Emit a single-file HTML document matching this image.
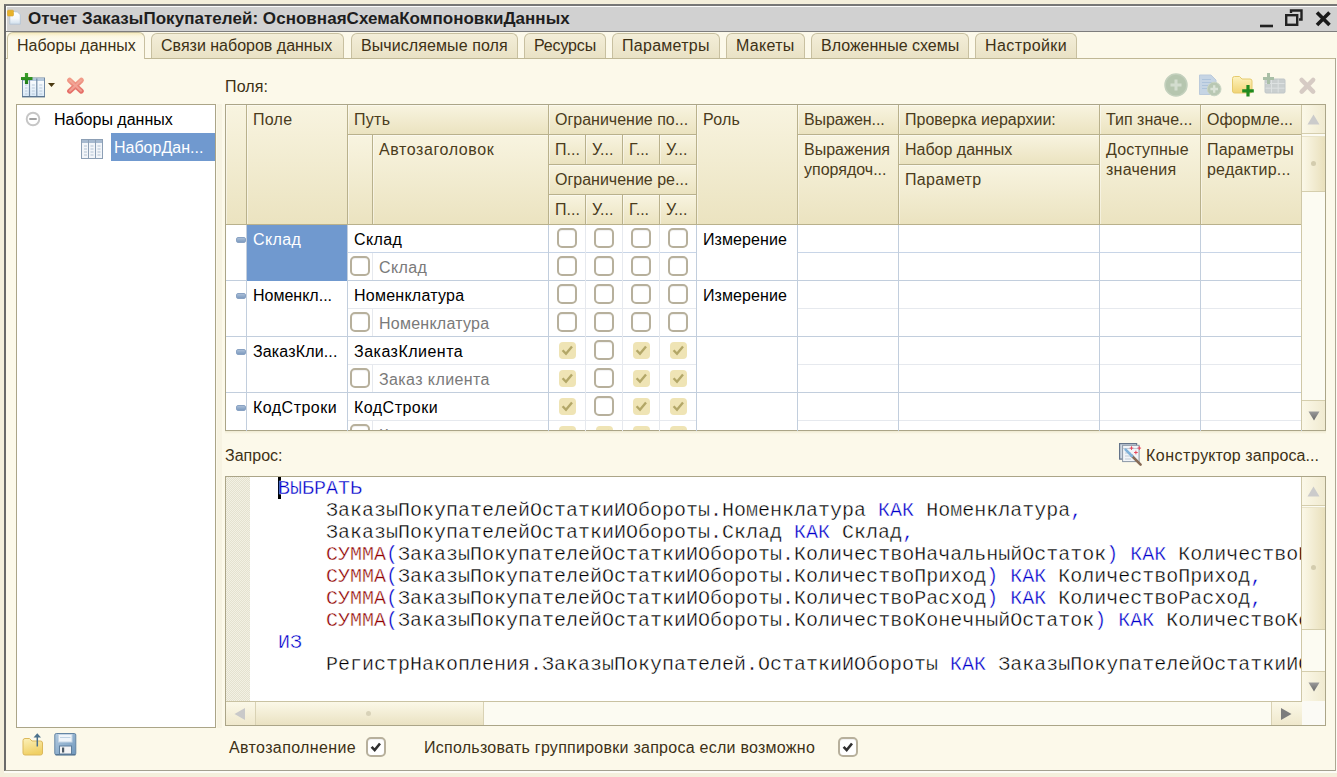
<!DOCTYPE html><html lang="ru"><head><meta charset="utf-8"><title>Отчет ЗаказыПокупателей</title><style>
*{box-sizing:border-box;margin:0;padding:0}
html,body{width:1337px;height:777px;overflow:hidden}
body{background:#f4efdc;font-family:"Liberation Sans",sans-serif;font-size:16px;color:#000;position:relative}
.a{position:absolute}
.t{position:absolute;white-space:nowrap;line-height:20px;height:20px}
#frame{left:4px;top:4px;width:1340px;height:767px;border:2px solid #6a6a6a;border-top-color:#777;border-bottom:1px solid #a3a090;background:#fcf9ea;box-shadow:0 2px 0 #fdfcf6}
#title{left:6px;top:6px;width:1331px;height:25px;background:#d1d1d1;border-top:1px solid #fcfcfc;border-left:1px solid #fcfcfc}
#titleline{left:6px;top:31px;width:1331px;height:1px;background:#7d7d7d}
#ttext{left:28px;top:9px;letter-spacing:.04px;font-weight:bold;font-size:17px;color:#1e1e1e;line-height:20px}
.tab{position:absolute;top:33px;height:25px;border:1px solid #c8c0a0;border-bottom:none;border-radius:6px 6px 0 0;background:linear-gradient(#f3eed8,#e9e2c5);color:#3d3116;line-height:24px;padding-left:9px;white-space:nowrap;overflow:hidden}
.tab.act{top:32px;height:27px;background:linear-gradient(#f6ebbd 0,#fbf6e0 3px,#fcf9ea 6px);line-height:26px;z-index:3}
#tabline{left:6px;top:58px;width:1330px;height:1px;background:#c0b896}
.hc{position:absolute;background:linear-gradient(#f8f4e0,#ebe3c0);border-right:1px solid #b9b18c;border-bottom:1px solid #b9b18c;box-shadow:inset 1px 1px 0 rgba(255,255,255,.45);color:#4a3c1c;padding:5px 0 0 6px;line-height:20px;overflow:hidden;white-space:nowrap}
.hc.w{white-space:normal}
.cb{position:absolute;width:20px;height:20px;border:2px solid #b7b09c;border-radius:5px;background:#fff;box-shadow:inset 0 1px 1px rgba(0,0,0,.06)}
.cd{position:absolute;width:17px;height:17px;border-radius:4px;background:#efe4b5}
.hl{position:absolute;height:1px;left:226px;width:1074px}
.vl{position:absolute;width:1px;top:225px;height:206px}
.sql{position:absolute;left:278px;font-family:"Liberation Mono",monospace;font-size:20px;line-height:22px;height:22px;white-space:pre;color:#000;-webkit-text-stroke:0.38px #fff}
.k{color:#0000cc}.f{color:#900000}
</style></head><body>
<div class="a" id="frame"></div>
<div class="a" id="title"></div><div class="a" id="titleline"></div>
<div class="t" id="ttext">Отчет ЗаказыПокупателей: ОсновнаяСхемаКомпоновкиДанных</div>
<div class="a" id="tabline"></div>
<div class="a" style="left:1335px;top:58px;width:1px;height:713px;background:#aca892"></div><div class="a" style="left:1336px;top:59px;width:1px;height:714px;background:#fdfcf5"></div>
<div class="tab act" style="left:7px;width:138px;">Наборы данных</div>
<div class="tab" style="left:151px;width:193px;">Связи наборов данных</div>
<div class="tab" style="left:351px;width:167px;letter-spacing:0.08px;">Вычисляемые поля</div>
<div class="tab" style="left:524px;width:82px;letter-spacing:-0.15px;">Ресурсы</div>
<div class="tab" style="left:612px;width:108px;letter-spacing:0.28px;">Параметры</div>
<div class="tab" style="left:726px;width:79px;letter-spacing:0.3px;">Макеты</div>
<div class="tab" style="left:811px;width:158px;">Вложенные схемы</div>
<div class="tab" style="left:975px;width:102px;letter-spacing:0.4px;">Настройки</div>
<svg class="a" style="left:20px;top:72px" width="38" height="26" viewBox="0 0 38 26">
<defs><linearGradient id="tc" x1="0" y1="0" x2="0" y2="1"><stop offset="0" stop-color="#ffffff"/><stop offset="1" stop-color="#d9e9f7"/></linearGradient>
<linearGradient id="pl" x1="0" y1="0" x2="0" y2="1"><stop offset="0" stop-color="#3da32b"/><stop offset="1" stop-color="#1f7d17"/></linearGradient></defs>
<rect x="2.500" y="6" width="22" height="18.500" fill="url(#tc)" stroke="#7089a5"/>
<rect x="3" y="6.500" width="21" height="2.500" fill="#b4c8dc"/>
<path d="M9.500 6.500v18M16.800 6.500v18" stroke="#7089a5" stroke-width="1.200"/>
<path d="M2 24.700h23" stroke="#5b7590" stroke-width="1.400"/>
<path d="M5 13h2.500M5 16h2.500M5 19h2.500M5 22h2.500M11.800 13h3M11.800 16h3M11.800 19h3M11.800 22h3M19.300 13h3M19.300 16h3M19.300 19h3M19.300 22h3" stroke="#b9c9da"/>
<path d="M6.500 1v11M1 6.500h11.500" stroke="url(#pl)" stroke-width="3.200"/>
<path d="M28 11h7l-3.500 4z" fill="#4a3a12"/>
</svg>
<svg class="a" style="left:65px;top:76px" width="22" height="20" viewBox="0 0 22 20"><defs><linearGradient id="rx" x1="0" y1="0" x2="0" y2="1"><stop offset="0" stop-color="#f19b88"/><stop offset="1" stop-color="#e56f68"/></linearGradient></defs><path d="M4.700 4.300L16.300 15.100M16.300 4.300L4.700 15.100" stroke="url(#rx)" stroke-width="5.200" stroke-linecap="round"/><path d="M5 4.600L16 14.800M16 4.600L5 14.800" stroke="#f3aa9c" stroke-width="2" stroke-linecap="round" opacity=".8"/></svg>
<div class="a" style="left:16px;top:104px;width:200px;height:624px;background:#fff;border:1px solid #aba588"></div>
<svg class="a" style="left:25px;top:111px" width="16" height="16" viewBox="0 0 16 16"><circle cx="8" cy="8" r="6.300" fill="#fff" stroke="#c6c6c6" stroke-width="1.900"/><path d="M4.300 8h7.400" stroke="#a2a2a2" stroke-width="2"/></svg>
<div class="t" style="left:54px;top:110px">Наборы данных</div>
<div class="a" style="left:111px;top:133px;width:104px;height:28px;background:#7099cf"></div>
<div class="t" style="left:114px;top:138px;color:#fff">НаборДан...</div>
<svg class="a" style="left:80px;top:138px" width="24" height="22" viewBox="0 0 24 22">
<rect x="1.5" y="1.5" width="21" height="19" fill="#f2f5f9" stroke="#8c9fb5"/>
<rect x="2" y="2" width="20" height="3" fill="#a6b9cf"/>
<path d="M8.5 2v18M15.5 2v18" stroke="#8c9fb5"/>
<path d="M4 8h3M4 11h3M4 14h3M4 17h3M10.5 8h3M10.5 11h3M10.5 14h3M10.5 17h3M17.5 8h3M17.5 11h3M17.5 14h3M17.5 17h3" stroke="#b3c2d3"/>
</svg>
<svg class="a" style="left:21px;top:732px" width="24" height="24" viewBox="0 0 24 24">
<defs><linearGradient id="fo" x1="0" y1="0" x2=".3" y2="1"><stop offset="0" stop-color="#fcf1bb"/><stop offset="1" stop-color="#f0d064"/></linearGradient></defs>
<path d="M2 8.500q0-2 2-2h4.500l2.500 2.500h8.500q2 0 2 2v10q0 2-2 2h-15.500q-2 0-2-2z" fill="url(#fo)" stroke="#dcb95c"/>
<path d="M16.300 14.500V5" fill="none" stroke="#4b718c" stroke-width="1.500"/>
<path d="M12.600 5.600l3.700-4.400l3.700 4.400z" fill="#4b718c"/>
</svg>
<svg class="a" style="left:54px;top:732px" width="24" height="24" viewBox="0 0 24 24">
<defs><linearGradient id="fl" x1="0" y1="0" x2="1" y2="1"><stop offset="0" stop-color="#b3cbe0"/><stop offset="1" stop-color="#6f98bd"/></linearGradient></defs>
<rect x=".800" y="1.500" width="21" height="21.300" rx="1.500" fill="url(#fl)" stroke="#6485a3"/>
<path d="M1.500 22.800h20" stroke="#4f6f8c" stroke-width="1.200"/>
<rect x="4.500" y="2.500" width="13.500" height="7.500" fill="#f0f5fa" stroke="#c6d6e5"/>
<path d="M6 5.500h10.500" stroke="#bfd2e3"/>
<rect x="5.500" y="14" width="12" height="8" fill="#f4f4f4" stroke="#5f7f9d"/>
<rect x="8" y="15.500" width="2.200" height="5" fill="#4d5a66"/>
</svg>
<div class="a" style="left:217px;top:104px;width:5px;height:624px;background:#f7f3e2"></div>
<div class="t" style="left:225px;top:77px;letter-spacing:.14px;color:#3d3116">Поля:</div>
<div class="a" style="left:225px;top:104px;width:1101px;height:327px;background:#fff;border:1px solid #aba588"></div>
<div class="a" style="left:225px;top:431px;width:1101px;height:3px;background:linear-gradient(#efead2,#fcf9ea)"></div>
<div class="hc" style="left:226px;top:105px;width:21px;height:120px;"></div>
<div class="hc" style="left:247px;top:105px;width:101px;height:120px;letter-spacing:0.27px;">Поле</div>
<div class="hc" style="left:348px;top:105px;width:201px;height:30px;letter-spacing:0.3px;">Путь</div>
<div class="hc" style="left:348px;top:135px;width:25px;height:90px;"></div>
<div class="hc" style="left:373px;top:135px;width:176px;height:90px;letter-spacing:0.6px;">Автозаголовок</div>
<div class="hc" style="left:549px;top:105px;width:148px;height:30px;">Ограничение по...</div>
<div class="hc" style="left:549px;top:135px;width:37px;height:30px;">П...</div>
<div class="hc" style="left:586px;top:135px;width:37px;height:30px;">У...</div>
<div class="hc" style="left:623px;top:135px;width:37px;height:30px;">Г...</div>
<div class="hc" style="left:660px;top:135px;width:37px;height:30px;">У...</div>
<div class="hc" style="left:549px;top:165px;width:148px;height:30px;">Ограничение ре...</div>
<div class="hc" style="left:549px;top:195px;width:37px;height:30px;">П...</div>
<div class="hc" style="left:586px;top:195px;width:37px;height:30px;">У...</div>
<div class="hc" style="left:623px;top:195px;width:37px;height:30px;">Г...</div>
<div class="hc" style="left:660px;top:195px;width:37px;height:30px;">У...</div>
<div class="hc" style="left:697px;top:105px;width:101px;height:120px;letter-spacing:0.22px;">Роль</div>
<div class="hc" style="left:798px;top:105px;width:101px;height:30px;letter-spacing:-0.12px;">Выражен...</div>
<div class="hc w" style="left:798px;top:135px;width:101px;height:90px;">Выражения упорядоч...</div>
<div class="hc" style="left:899px;top:105px;width:201px;height:30px;">Проверка иерархии:</div>
<div class="hc" style="left:899px;top:135px;width:201px;height:30px;">Набор данных</div>
<div class="hc" style="left:899px;top:165px;width:201px;height:60px;letter-spacing:0.34px;">Параметр</div>
<div class="hc" style="left:1100px;top:105px;width:101px;height:30px;">Тип значе...</div>
<div class="hc w" style="left:1100px;top:135px;width:101px;height:90px;"><span style="letter-spacing:.17px">Доступные</span> <span style="letter-spacing:.24px">значения</span></div>
<div class="hc" style="left:1201px;top:105px;width:101px;height:30px;">Оформле...</div>
<div class="hc w" style="left:1201px;top:135px;width:101px;height:90px;"><span style="letter-spacing:.19px">Параметры</span> <span style="letter-spacing:.22px">редактир...</span></div>
<div class="hl" style="top:252px;left:348px;width:349px;background:#c8d5e7"></div>
<div class="hl" style="top:252px;left:798px;width:503px;background:#c8d5e7"></div>
<div class="hl" style="top:280px;background:#c2cedd;width:1075px"></div>
<div class="hl" style="top:308px;left:348px;width:349px;background:#e6e9ee"></div>
<div class="hl" style="top:308px;left:798px;width:503px;background:#e6e9ee"></div>
<div class="hl" style="top:336px;background:#c2cedd;width:1075px"></div>
<div class="hl" style="top:364px;left:348px;width:349px;background:#e6e9ee"></div>
<div class="hl" style="top:364px;left:798px;width:503px;background:#e6e9ee"></div>
<div class="hl" style="top:392px;background:#c2cedd;width:1075px"></div>
<div class="hl" style="top:420px;left:348px;width:349px;background:#e6e9ee"></div>
<div class="hl" style="top:420px;left:798px;width:503px;background:#e6e9ee"></div>
<div class="vl" style="left:246px;background:#c2cedd"></div>
<div class="vl" style="left:347px;background:#c2cedd"></div>
<div class="vl" style="left:548px;background:#c2cedd"></div>
<div class="vl" style="left:585px;background:#e6e9ee"></div>
<div class="vl" style="left:622px;background:#e6e9ee"></div>
<div class="vl" style="left:659px;background:#e6e9ee"></div>
<div class="vl" style="left:696px;background:#c2cedd"></div>
<div class="vl" style="left:797px;background:#c2cedd"></div>
<div class="vl" style="left:898px;background:#c2cedd"></div>
<div class="vl" style="left:1099px;background:#c2cedd"></div>
<div class="vl" style="left:1200px;background:#c2cedd"></div>
<div class="vl" style="left:1301px;background:#c2cedd"></div>
<div class="a" style="left:372px;top:253px;width:1px;height:27px;background:#e6e9ee"></div>
<div class="a" style="left:372px;top:309px;width:1px;height:27px;background:#e6e9ee"></div>
<div class="a" style="left:372px;top:365px;width:1px;height:27px;background:#e6e9ee"></div>
<div class="a" style="left:372px;top:421px;width:1px;height:9px;background:#e6e9ee"></div>
<div class="a" style="left:247px;top:225px;width:100px;height:56px;background:#7099cf"></div>
<div class="a" style="left:226px;top:225px;width:1075px;height:205px;overflow:hidden"><div class="a" style="left:-226px;top:-225px;width:1337px;height:777px">
<div class="a" style="left:236px;top:237px;width:10px;height:6px;border-radius:2px;background:linear-gradient(#a9bdd6,#7f9cc0);border:1px solid #8aa3c4"></div>
<div class="t" style="left:253px;top:230px;letter-spacing:0.4px;color:#fff">Склад</div>
<div class="t" style="left:354px;top:230px;letter-spacing:0.4px;">Склад</div>
<div class="t" style="left:379px;top:258px;letter-spacing:0.4px;color:#7a7a7a">Склад</div>
<div class="t" style="left:703px;top:230px;letter-spacing:0.09px;">Измерение</div>
<div class="cb" style="left:350px;top:256px"></div>
<div class="cb" style="left:557px;top:228px"></div>
<div class="cb" style="left:594px;top:228px"></div>
<div class="cb" style="left:631px;top:228px"></div>
<div class="cb" style="left:668px;top:228px"></div>
<div class="cb" style="left:557px;top:256px"></div>
<div class="cb" style="left:594px;top:256px"></div>
<div class="cb" style="left:631px;top:256px"></div>
<div class="cb" style="left:668px;top:256px"></div>
<div class="a" style="left:236px;top:293px;width:10px;height:6px;border-radius:2px;background:linear-gradient(#a9bdd6,#7f9cc0);border:1px solid #8aa3c4"></div>
<div class="t" style="left:253px;top:286px;">Номенкл...</div>
<div class="t" style="left:354px;top:286px;letter-spacing:0.25px;">Номенклатура</div>
<div class="t" style="left:379px;top:314px;letter-spacing:0.25px;color:#7a7a7a">Номенклатура</div>
<div class="t" style="left:703px;top:286px;letter-spacing:0.09px;">Измерение</div>
<div class="cb" style="left:350px;top:312px"></div>
<div class="cb" style="left:557px;top:284px"></div>
<div class="cb" style="left:594px;top:284px"></div>
<div class="cb" style="left:631px;top:284px"></div>
<div class="cb" style="left:668px;top:284px"></div>
<div class="cb" style="left:557px;top:312px"></div>
<div class="cb" style="left:594px;top:312px"></div>
<div class="cb" style="left:631px;top:312px"></div>
<div class="cb" style="left:668px;top:312px"></div>
<div class="a" style="left:236px;top:349px;width:10px;height:6px;border-radius:2px;background:linear-gradient(#a9bdd6,#7f9cc0);border:1px solid #8aa3c4"></div>
<div class="t" style="left:253px;top:342px;letter-spacing:0.15px;">ЗаказКли...</div>
<div class="t" style="left:354px;top:342px;letter-spacing:0.49px;">ЗаказКлиента</div>
<div class="t" style="left:379px;top:370px;letter-spacing:0.4px;color:#7a7a7a">Заказ клиента</div>
<div class="cb" style="left:350px;top:368px"></div>
<div class="cd" style="left:558.5px;top:341.5px"><svg width="17" height="17" viewBox="0 0 17 17" style="display:block"><path d="M3.6 8.2l3.4 3.6l6-7.2" fill="none" stroke="#b3a768" stroke-width="2.4"/></svg></div>
<div class="cb" style="left:594px;top:340px"></div>
<div class="cd" style="left:632.5px;top:341.5px"><svg width="17" height="17" viewBox="0 0 17 17" style="display:block"><path d="M3.6 8.2l3.4 3.6l6-7.2" fill="none" stroke="#b3a768" stroke-width="2.4"/></svg></div>
<div class="cd" style="left:669.5px;top:341.5px"><svg width="17" height="17" viewBox="0 0 17 17" style="display:block"><path d="M3.6 8.2l3.4 3.6l6-7.2" fill="none" stroke="#b3a768" stroke-width="2.4"/></svg></div>
<div class="cd" style="left:558.5px;top:369.5px"><svg width="17" height="17" viewBox="0 0 17 17" style="display:block"><path d="M3.6 8.2l3.4 3.6l6-7.2" fill="none" stroke="#b3a768" stroke-width="2.4"/></svg></div>
<div class="cb" style="left:594px;top:368px"></div>
<div class="cd" style="left:632.5px;top:369.5px"><svg width="17" height="17" viewBox="0 0 17 17" style="display:block"><path d="M3.6 8.2l3.4 3.6l6-7.2" fill="none" stroke="#b3a768" stroke-width="2.4"/></svg></div>
<div class="cd" style="left:669.5px;top:369.5px"><svg width="17" height="17" viewBox="0 0 17 17" style="display:block"><path d="M3.6 8.2l3.4 3.6l6-7.2" fill="none" stroke="#b3a768" stroke-width="2.4"/></svg></div>
<div class="a" style="left:236px;top:405px;width:10px;height:6px;border-radius:2px;background:linear-gradient(#a9bdd6,#7f9cc0);border:1px solid #8aa3c4"></div>
<div class="t" style="left:253px;top:398px;letter-spacing:0.47px;">КодСтроки</div>
<div class="t" style="left:354px;top:398px;letter-spacing:0.47px;">КодСтроки</div>
<div class="t" style="left:379px;top:426px;color:#7a7a7a">К</div>
<div class="cb" style="left:350px;top:424px"></div>
<div class="cd" style="left:558.5px;top:397.5px"><svg width="17" height="17" viewBox="0 0 17 17" style="display:block"><path d="M3.6 8.2l3.4 3.6l6-7.2" fill="none" stroke="#b3a768" stroke-width="2.4"/></svg></div>
<div class="cb" style="left:594px;top:396px"></div>
<div class="cd" style="left:632.5px;top:397.5px"><svg width="17" height="17" viewBox="0 0 17 17" style="display:block"><path d="M3.6 8.2l3.4 3.6l6-7.2" fill="none" stroke="#b3a768" stroke-width="2.4"/></svg></div>
<div class="cd" style="left:669.5px;top:397.5px"><svg width="17" height="17" viewBox="0 0 17 17" style="display:block"><path d="M3.6 8.2l3.4 3.6l6-7.2" fill="none" stroke="#b3a768" stroke-width="2.4"/></svg></div>
<div class="cd" style="left:558.5px;top:425.5px"><svg width="17" height="17" viewBox="0 0 17 17" style="display:block"><path d="M3.6 8.2l3.4 3.6l6-7.2" fill="none" stroke="#b3a768" stroke-width="2.4"/></svg></div>
<div class="cd" style="left:595.5px;top:425.5px"><svg width="17" height="17" viewBox="0 0 17 17" style="display:block"><path d="M3.6 8.2l3.4 3.6l6-7.2" fill="none" stroke="#b3a768" stroke-width="2.4"/></svg></div>
<div class="cd" style="left:632.5px;top:425.5px"><svg width="17" height="17" viewBox="0 0 17 17" style="display:block"><path d="M3.6 8.2l3.4 3.6l6-7.2" fill="none" stroke="#b3a768" stroke-width="2.4"/></svg></div>
<div class="cd" style="left:669.5px;top:425.5px"><svg width="17" height="17" viewBox="0 0 17 17" style="display:block"><path d="M3.6 8.2l3.4 3.6l6-7.2" fill="none" stroke="#b3a768" stroke-width="2.4"/></svg></div>
</div></div>
<div class="a" style="left:1301px;top:105px;width:24px;height:325px;background:#fcfbf2;border-left:1px solid #cfc8a8"></div>
<div class="a" style="left:1302px;top:105px;width:23px;height:29px;background:linear-gradient(90deg,#fbf8e8,#f0ead0);border-bottom:1px solid #d5cead"></div>
<svg class="a" style="left:1307px;top:114px" width="13" height="11"><path d="M6.5 0.5L12.5 10.5H0.5z" fill="#cbcbcb"/></svg>
<div class="a" style="left:1302px;top:136px;width:23px;height:56px;background:linear-gradient(90deg,#fbf8e8,#e9e0bc);border-top:1px solid #e9e3c8;border-bottom:1px solid #d5cead"></div>
<div class="a" style="left:1311px;top:161px;width:5px;height:5px;border-radius:3px;background:#d3ccae"></div>
<div class="a" style="left:1302px;top:400px;width:23px;height:30px;background:linear-gradient(90deg,#fbf8e8,#f0ead0);border-top:1px solid #d5cead"></div>
<svg class="a" style="left:1308px;top:411px" width="12" height="10"><defs><linearGradient id="ar105" x1="0" y1="0" x2="0" y2="1"><stop offset="0" stop-color="#9a9a9a"/><stop offset="1" stop-color="#6a6a6a"/></linearGradient></defs><path d="M0.5 0.5H11.5L6 9.500z" fill="url(#ar105)"/></svg>
<svg class="a" style="left:1160px;top:70px" width="160" height="30" viewBox="0 0 160 30">
<defs><linearGradient id="gf" x1="0" y1="0" x2="0" y2="1"><stop offset="0" stop-color="#fdf3c0"/><stop offset="1" stop-color="#f1d374"/></linearGradient></defs>
<circle cx="16" cy="15" r="11" fill="#b6c6af" stroke="#c3d0bd" stroke-width="1.500"/>
<path d="M16 9.500v11M10.500 15h11" stroke="#d3ddcf" stroke-width="3"/>
<path d="M39.500 5h11.500l5 5v14.500h-16.500z" fill="#c6d5e4" stroke="#bccbdb"/>
<path d="M42 9.500h9M42 12.500h11M42 15.500h11M42 18.500h8" stroke="#aec4db"/>
<circle cx="54.200" cy="19" r="6.800" fill="#b9c8b3" stroke="#c9d5c4"/>
<path d="M54.200 15.200v7.600M50.400 19h7.600" stroke="#dbe3d7" stroke-width="2.300"/>
<path d="M72.500 8.500q0-2 2-2h5l2.500 2.500h8q2 0 2 2v10q0 2-2 2h-15.500q-2 0-2-2z" fill="url(#gf)" stroke="#e6cb6e"/>
<path d="M88 15v11.500M82.200 20.800h11.600" stroke="#1f8a1f" stroke-width="3.200"/>
<rect x="105" y="9" width="20" height="14" rx="1.200" fill="#cacfcf" stroke="#c0c6c8"/>
<path d="M105.500 13.500h19M105.500 18.200h19M111.500 9.500v13M118.200 9.500v13" stroke="#dde1e1"/>
<path d="M108.500 3v11M103 8.500h11" stroke="#a9bfa6" stroke-width="3"/>
<path d="M141.700 10l11.400 11.600M153.100 10l-11.400 11.600" stroke="#d6cbc4" stroke-width="4.600" stroke-linecap="round"/>
</svg>
<div class="t" style="left:225px;top:446px;color:#3d3116">Запрос:</div>
<div class="t" style="left:1146px;top:446px;color:#3d3116;letter-spacing:0.08px"><span style="letter-spacing:.5px">Констр</span>уктор запроса...</div>
<svg class="a" style="left:1118px;top:442px" width="26" height="25" viewBox="0 0 26 25">
<rect x="1.600" y="1.600" width="17" height="15.500" fill="#cfd8e2" stroke="#64748a" stroke-width="1.200"/>
<rect x="4.600" y="3.300" width="16.500" height="16.300" fill="#f1f4f8" stroke="#8a97a6" stroke-width="1"/>
<path d="M7 11h6M7 14h6M7 17h6M5 6.500h15" stroke="#bcc7d3" stroke-width=".9"/>
<path d="M13.500 4.300v3.600M11.700 6.100h3.600M21.300 4.300v3.600M19.500 6.100h3.600M17.900 8.700v3.600M16.100 10.500h3.600" stroke="#e8465a" stroke-width="1"/>
<path d="M13.500 13.500L22.600 22.600" stroke="#866a55" stroke-width="2.600" stroke-linecap="round"/>
<path d="M7.600 7.600L14 14" stroke="#7fb1d9" stroke-width="2.600" stroke-linecap="round"/>
</svg>
<div class="a" style="left:225px;top:476px;width:1101px;height:250px;background:#fff;border:1px solid #aba588"></div>
<div class="a" style="left:226px;top:477px;width:24px;height:224px;background-color:#e4e1cf;background-image:linear-gradient(45deg,#f3f1e4 25%,transparent 25%,transparent 75%,#f3f1e4 75%),linear-gradient(45deg,#f3f1e4 25%,transparent 25%,transparent 75%,#f3f1e4 75%);background-size:2px 2px;background-position:0 0,1px 1px"></div>
<div class="a" style="left:278px;top:477px;width:3px;height:22px;background:#000"></div>
<div class="a" style="left:250px;top:477px;width:1051px;height:224px;overflow:hidden">
<div class="sql" style="left:28px;top:1px"><span class="k">ВЫБРАТЬ</span></div>
<div class="sql" style="left:28px;top:23px">    ЗаказыПокупателейОстаткиИОбороты.Номенклатура <span class="k">КАК</span> Номенклатура<span class="k">,</span></div>
<div class="sql" style="left:28px;top:45px">    ЗаказыПокупателейОстаткиИОбороты.Склад <span class="k">КАК</span> Склад<span class="k">,</span></div>
<div class="sql" style="left:28px;top:67px">    <span class="f">СУММА</span><span class="k">(</span>ЗаказыПокупателейОстаткиИОбороты.КоличествоНачальныйОстаток<span class="k">)</span> <span class="k">КАК</span> КоличествоНачальныйОстаток<span class="k">,</span></div>
<div class="sql" style="left:28px;top:89px">    <span class="f">СУММА</span><span class="k">(</span>ЗаказыПокупателейОстаткиИОбороты.КоличествоПриход<span class="k">)</span> <span class="k">КАК</span> КоличествоПриход<span class="k">,</span></div>
<div class="sql" style="left:28px;top:111px">    <span class="f">СУММА</span><span class="k">(</span>ЗаказыПокупателейОстаткиИОбороты.КоличествоРасход<span class="k">)</span> <span class="k">КАК</span> КоличествоРасход<span class="k">,</span></div>
<div class="sql" style="left:28px;top:133px">    <span class="f">СУММА</span><span class="k">(</span>ЗаказыПокупателейОстаткиИОбороты.КоличествоКонечныйОстаток<span class="k">)</span> <span class="k">КАК</span> КоличествоКонечныйОстаток</div>
<div class="sql" style="left:28px;top:155px"><span class="k">ИЗ</span></div>
<div class="sql" style="left:28px;top:177px">    РегистрНакопления.ЗаказыПокупателей.ОстаткиИОбороты <span class="k">КАК</span> ЗаказыПокупателейОстаткиИОбороты</div>
</div>
<div class="a" style="left:1301px;top:477px;width:24px;height:224px;background:#fcfbf2;border-left:1px solid #cfc8a8"></div>
<div class="a" style="left:1302px;top:477px;width:23px;height:29px;background:linear-gradient(90deg,#fbf8e8,#f0ead0);border-bottom:1px solid #d5cead"></div>
<svg class="a" style="left:1307px;top:486px" width="13" height="11"><path d="M6.5 0.5L12.5 10.5H0.5z" fill="#cbcbcb"/></svg>
<div class="a" style="left:1302px;top:507px;width:23px;height:123px;background:linear-gradient(90deg,#fbf8e8,#e9e0bc);border-top:1px solid #e9e3c8;border-bottom:1px solid #d5cead"></div>
<div class="a" style="left:1311px;top:565px;width:5px;height:5px;border-radius:3px;background:#d3ccae"></div>
<div class="a" style="left:1302px;top:671px;width:23px;height:30px;background:linear-gradient(90deg,#fbf8e8,#f0ead0);border-top:1px solid #d5cead"></div>
<svg class="a" style="left:1308px;top:682px" width="12" height="10"><defs><linearGradient id="ar477" x1="0" y1="0" x2="0" y2="1"><stop offset="0" stop-color="#9a9a9a"/><stop offset="1" stop-color="#6a6a6a"/></linearGradient></defs><path d="M0.5 0.5H11.5L6 9.500z" fill="url(#ar477)"/></svg>
<div class="a" style="left:226px;top:701px;width:1076px;height:24px;background:#fcfbf2;border-top:1px solid #c9c2a2"></div>
<div class="a" style="left:226px;top:702px;width:30px;height:23px;background:linear-gradient(#fbf8e8,#efe8cc);border-right:1px solid #d9d2b4"></div>
<svg class="a" style="left:234px;top:707px" width="12" height="14"><path d="M0.500 7L11 1v12z" fill="#c9c9c9"/></svg>
<div class="a" style="left:256px;top:702px;width:228px;height:23px;background:linear-gradient(#fbf8e8,#eae2c2);border-right:1px solid #d9d2b4"></div>
<div class="a" style="left:366px;top:711px;width:5px;height:5px;border-radius:3px;background:#d8d2b8"></div>
<div class="a" style="left:1271px;top:702px;width:31px;height:23px;background:linear-gradient(#fbf8e8,#efe8cc);border-left:1px solid #d9d2b4"></div>
<svg class="a" style="left:1280px;top:707px" width="12" height="14"><path d="M11.500 7L1 1v12z" fill="#7d7d7d"/></svg>
<div class="a" style="left:1302px;top:701px;width:23px;height:24px;background:#fbfaf5"></div>
<div class="t" style="left:229px;top:738px;letter-spacing:.37px;color:#3d3116">Автозаполнение</div>
<div class="cb" style="left:366px;top:737px"><svg width="16" height="16" viewBox="0 0 16 16" style="display:block"><path d="M3.600 7.800l3.100 3.300l5.300-6.600" fill="none" stroke="#303030" stroke-width="2.600"/></svg></div>
<div class="t" style="left:424px;top:738px;color:#3d3116;letter-spacing:0.26px">Использовать группировки запроса если возможно</div>
<div class="cb" style="left:838px;top:737px"><svg width="16" height="16" viewBox="0 0 16 16" style="display:block"><path d="M3.600 7.800l3.100 3.300l5.300-6.600" fill="none" stroke="#303030" stroke-width="2.600"/></svg></div>
<svg class="a" style="left:6px;top:9px" width="18" height="18" viewBox="0 0 18 18">
<defs><linearGradient id="pg" x1="0" y1="0" x2="0" y2="1"><stop offset="0" stop-color="#ffffff"/><stop offset=".55" stop-color="#f4f7fa"/><stop offset="1" stop-color="#cfdfec"/></linearGradient></defs>
<path d="M3.800 2.800h7.500l3 3v9.400h-10.500z" fill="url(#pg)" stroke="#b4c3d2" stroke-width=".9"/>
<rect x="1.500" y="1.200" width="6" height="5.800" rx="1" fill="#e8b22a" stroke="#d9a326" stroke-width=".6"/>
<path d="M8 3.200l2 2" stroke="#fff" stroke-width="1"/>
</svg>
<svg class="a" style="left:1256px;top:7px" width="80" height="23" viewBox="0 0 80 23">
<path d="M4 19h13" stroke="#222" stroke-width="2.600"/>
<path d="M35 6V3.500h10.500v9H43" fill="none" stroke="#222" stroke-width="2.400"/>
<rect x="30.200" y="8.200" width="11" height="9.600" fill="none" stroke="#222" stroke-width="2.400"/>
<path d="M61 5.500l12.500 12.500M73.500 5.500L61 18" stroke="#1a1a1a" stroke-width="3.600"/>
</svg>
</body></html>
